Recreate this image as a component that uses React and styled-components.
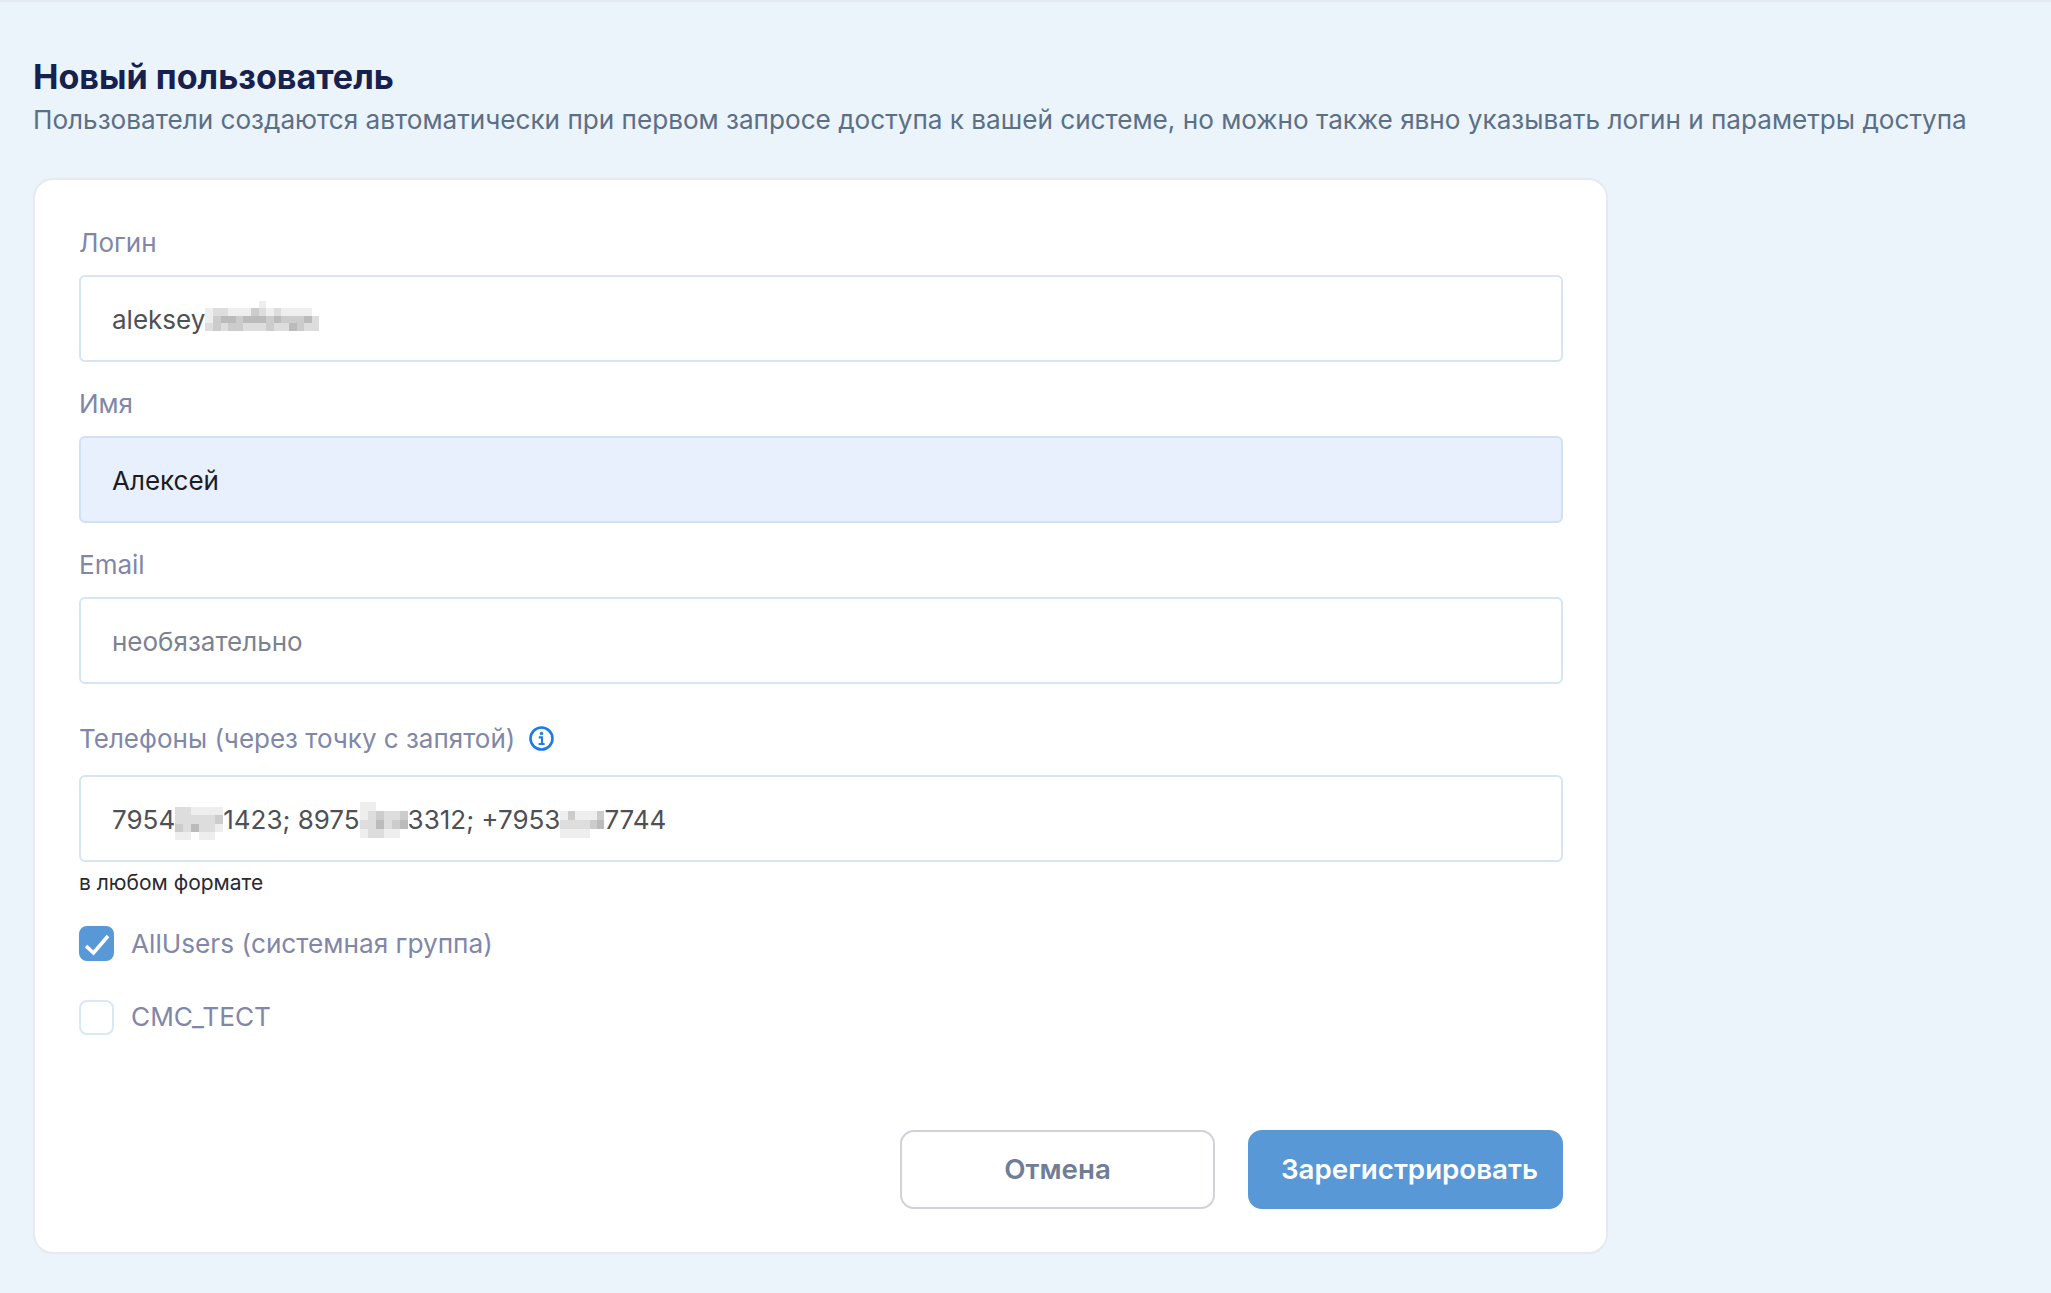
import React from 'react';
import styled, { createGlobalStyle } from 'styled-components';

const Global = createGlobalStyle`
  html, body { margin: 0; padding: 0; background: #ebf3fb; }
  body { font-family: Inter, "Noto Sans", sans-serif; }
`;

const Page = styled.div`
  width: 2051px;
  height: 1293px;
  box-sizing: border-box;
  padding: 55px 33px 0;
  background: #ebf3fb;
  border-top: 2px solid #e4eaf0;
  overflow: hidden;
`;
const Title = styled.h1`
  margin: 0;
  font-size: 34.1px;
  line-height: 40px;
  font-weight: 700;
  color: #17214f;
`;
const Subtitle = styled.p`
  margin: 3px 0 38px;
  font-size: 26.14px;
  line-height: 40px;
  color: #5b6f86;
  white-space: nowrap;
`;
const Card = styled.form`
  width: 1575px;
  height: 1076px;
  box-sizing: border-box;
  padding: 49px 43px 0 44px;
  background: #fff;
  border: 2px solid #e6eaee;
  border-radius: 20px;
  display: flex;
  flex-direction: column;
`;
const Field = styled.div`
  display: flex;
  flex-direction: column;
  margin-bottom: ${p => p.$mb || 0}px;
`;
const Label = styled.div`
  display: flex;
  align-items: center;
  gap: 13px;
  height: 26px;
  margin-bottom: ${p => p.$mb || 20}px;
  font-size: 26px;
  color: #8087a8;
`;
const InputBox = styled.div`
  height: 87px;
  box-sizing: border-box;
  display: flex;
  align-items: center;
  padding: 2px 31px 0;
  border: 2px solid ${p => (p.$filled ? '#d3e0f0' : '#d6e4f3')};
  border-radius: 6px;
  background: ${p => (p.$filled ? '#e8f0fd' : '#fff')};
  font-size: 26px;
  color: ${p => (p.$filled ? '#1c1c22' : p.$muted ? '#7b8291' : '#4d5057')};
  white-space: pre;
`;
const MosaicGrid = styled.span`
  display: grid;
  grid-template-columns: repeat(${p => p.$cols}, 1fr);
  grid-auto-rows: 1fr;
  width: ${p => p.$w}px;
  height: ${p => p.$h}px;
  filter: blur(0.7px);
`;
const Cell = styled.i`
  background: ${p => p.$c};
`;
const Mosaic = ({ w, h, rows }) => (
  <MosaicGrid $w={w} $h={h} $cols={rows[0].length}>
    {rows.join('').split('').map((c, i) => (
      <Cell key={i} $c={`#${c}${c}${c}`} />
    ))}
  </MosaicGrid>
);
const Hint = styled.div`
  margin: 8px 0 29px;
  font-size: 21px;
  line-height: 26px;
  color: #2a2a33;
`;
const CheckRow = styled.label`
  display: flex;
  align-items: center;
  gap: 17px;
  height: 36px;
  margin-bottom: ${p => p.$mb || 0}px;
  font-size: 26.2px;
  color: #8087a8;
`;
const Box = styled.span`
  width: 35px;
  height: 35px;
  margin-top: ${p => (p.$on ? 0 : 3)}px;
  box-sizing: border-box;
  border-radius: 8px;
  display: flex;
  align-items: center;
  justify-content: center;
  background: ${p => (p.$on ? '#5898d6' : '#fff')};
  border: 2px solid ${p => (p.$on ? '#5898d6' : '#d9e8f7')};
`;
const Actions = styled.div`
  display: flex;
  justify-content: flex-end;
  gap: 33px;
  margin-top: 96px;
`;
const Button = styled.button`
  width: 315px;
  height: 79px;
  box-sizing: border-box;
  padding: 0 0 2px ${p => (p.$primary ? 8 : 0)}px;
  border-radius: 14px;
  font: 600 27.7px Inter, sans-serif;
  background: ${p => (p.$primary ? '#5898d6' : '#fff')};
  color: ${p => (p.$primary ? '#fff' : '#6f7d96')};
  border: 2px solid ${p => (p.$primary ? '#5898d6' : '#cfd2d8')};
`;

export default function App() {
  return (
    <Page>
      <Global />
      <Title>Новый пользователь</Title>
      <Subtitle>Пользователи создаются автоматически при первом запросе доступа к вашей системе, но можно также явно указывать логин и параметры доступа</Subtitle>
      <Card>
        <Field $mb={28}>
          <Label>Логин</Label>
          <InputBox>aleksey<Mosaic w={114} h={38} rows={['fffffffefffffff', 'eddeeecdedeeeef', 'ecbbcbbbcbcccbd', 'dcdccdddcddbcdd', 'fffffffffffffff']} /></InputBox>
        </Field>
        <Field $mb={28}>
          <Label>Имя</Label>
          <InputBox $filled>Алексей</InputBox>
        </Field>
        <Field $mb={41}>
          <Label>Email</Label>
          <InputBox $muted>необязательно</InputBox>
        </Field>
        <Field>
          <Label $mb={24}>
            Телефоны (через точку с запятой)
            <svg width="27" height="27" viewBox="0 0 27 27" fill="none">
              <circle cx="13.5" cy="13.5" r="11" stroke="#1b7ce8" strokeWidth="2.6" />
              <circle cx="13.5" cy="8.4" r="1.7" fill="#1b7ce8" />
              <path d="M10.8 12.3h3.2v6.5M10.6 19h6" stroke="#1b7ce8" strokeWidth="2.2" />
            </svg>
          </Label>
          <InputBox>
            7954<Mosaic w={48} h={41} rows={['ffffff', 'ddeeee', 'dddddc', 'cdbdde', 'eefeef']} />
            1423; 8975<Mosaic w={48} h={36} rows={['eeffff', 'edcddc', 'ddbdcb', 'eddeef']} />
            3312; +7953<Mosaic w={44} h={36} rows={['ffffff', 'eceeec', 'ddddcb', 'eeeeff']} />7744
          </InputBox>
          <Hint>в любом формате</Hint>
        </Field>
        <CheckRow $mb={37}>
          <Box $on>
            <svg width="31" height="31" viewBox="0 0 31 31" fill="none">
              <path d="M5 18l7.5 7L27 8" stroke="#fff" strokeWidth="3.6" />
            </svg>
          </Box>
          AllUsers (системная группа)
        </CheckRow>
        <CheckRow>
          <Box />
          СМС_ТЕСТ
        </CheckRow>
        <Actions>
          <Button type="button">Отмена</Button>
          <Button type="button" $primary>Зарегистрировать</Button>
        </Actions>
      </Card>
    </Page>
  );
}
